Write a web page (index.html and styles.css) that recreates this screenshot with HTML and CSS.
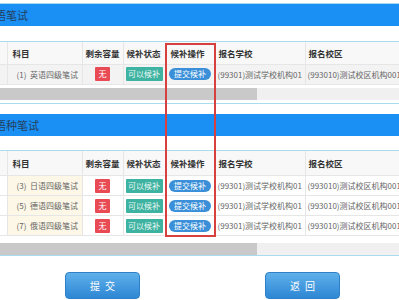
FILE: index.html
```html
<!DOCTYPE html>
<html>
<head>
<meta charset="utf-8">
<link rel="stylesheet" href="styles.css">
</head>
<body>
<div class="page">
  <section class="panel panel-first">
    <div class="panel-title"><span class="title-text">英语笔试</span></div>
    <div class="table-wrap">
      <table class="grid">
        <colgroup>
          <col class="c-idx"><col class="c-subj"><col class="c-left"><col class="c-state"><col class="c-op"><col class="c-school"><col class="c-campus"><col class="c-more">
        </colgroup>
        <thead>
          <tr class="head-row"><th></th><th>科目</th><th>剩余容量</th><th>候补状态</th><th>候补操作</th><th>报名学校</th><th>报名校区</th><th></th></tr>
        </thead>
        <tbody>
          <tr class="row row-hover">
            <td></td>
            <td class="subj">(1)&nbsp;&nbsp;英语四级笔试</td>
            <td class="center"><span class="tag tag-red">无</span></td>
            <td class="center"><span class="tag tag-teal">可以候补</span></td>
            <td class="center"><span class="pill">提交候补</span></td>
            <td class="txt">(99301)测试学校机构01</td>
            <td class="txt">(993010)测试校区机构001</td>
            <td></td>
          </tr>
        </tbody>
      </table>
      <div class="scrollbar scrollbar-first"><div class="thumb"></div></div>
    </div>
  </section>

  <section class="panel panel-second">
    <div class="panel-title"><span class="title-text title-text-2">小语种笔试</span></div>
    <div class="table-wrap table-wrap-2">
      <table class="grid">
        <colgroup>
          <col class="c-idx"><col class="c-subj"><col class="c-left"><col class="c-state"><col class="c-op"><col class="c-school"><col class="c-campus"><col class="c-more">
        </colgroup>
        <thead>
          <tr class="head-row head-row-tall"><th></th><th>科目</th><th>剩余容量</th><th>候补状态</th><th>候补操作</th><th>报名学校</th><th>报名校区</th><th></th></tr>
        </thead>
        <tbody>
          <tr class="row">
            <td></td>
            <td class="subj cream">(3)&nbsp;&nbsp;日语四级笔试</td>
            <td class="center"><span class="tag tag-red">无</span></td>
            <td class="center"><span class="tag tag-teal">可以候补</span></td>
            <td class="center"><span class="pill">提交候补</span></td>
            <td class="txt">(99301)测试学校机构01</td>
            <td class="txt">(993010)测试校区机构001</td>
            <td></td>
          </tr>
          <tr class="row">
            <td></td>
            <td class="subj cream">(5)&nbsp;&nbsp;德语四级笔试</td>
            <td class="center"><span class="tag tag-red">无</span></td>
            <td class="center"><span class="tag tag-teal">可以候补</span></td>
            <td class="center"><span class="pill">提交候补</span></td>
            <td class="txt">(99301)测试学校机构01</td>
            <td class="txt">(993010)测试校区机构001</td>
            <td></td>
          </tr>
          <tr class="row">
            <td></td>
            <td class="subj cream">(7)&nbsp;&nbsp;俄语四级笔试</td>
            <td class="center"><span class="tag tag-red">无</span></td>
            <td class="center"><span class="tag tag-teal">可以候补</span></td>
            <td class="center"><span class="pill">提交候补</span></td>
            <td class="txt">(99301)测试学校机构01</td>
            <td class="txt">(993010)测试校区机构001</td>
            <td></td>
          </tr>
        </tbody>
      </table>
      <div class="scrollbar scrollbar-second"><div class="thumb"></div></div>
    </div>
  </section>

  <div class="actions">
    <button class="btn">提交</button>
    <button class="btn">返回</button>
  </div>

  <div class="highlight-box"></div>
</div>
</body>
</html>
```

FILE: styles.css
```css
* { box-sizing: border-box; }

html, body {
  margin: 0;
  padding: 0;
  background: #ffffff;
}

body {
  width: 399px;
  height: 300px;
  overflow: hidden;
  font-family: "Noto Sans CJK SC", "Noto Sans", sans-serif;
  color: #333;
}

.page {
  position: relative;
  width: 399px;
  height: 300px;
  overflow: hidden;
  padding-top: 3px;
}

.panel {
  border-top: 1px solid #a9dcee;
}

.panel-second {
  margin-top: 3px;
  padding-top: 10px;
}

.panel-title {
  height: 22px;
  background: #1a8ff4;
  overflow: hidden;
  white-space: nowrap;
  font-size: 11px;
  line-height: 22px;
  color: #23415f;
}

.title-text {
  display: inline-block;
  margin-left: -16px;
}

.title-text-2 {
  margin-left: -16px;
}

.table-wrap {
  margin-top: 15px;
  border-top: 1px solid #a9dcee;
  overflow: hidden;
}

.table-wrap-2 {
  margin-top: 14px;
  border-bottom: 1px solid #a9dcee;
}

.grid {
  border-collapse: collapse;
  table-layout: fixed;
  width: 520px;
  font-size: 8px;
}

.c-idx { width: 7px; }
.c-subj { width: 75px; }
.c-left { width: 41px; }
.c-state { width: 42px; }
.c-op { width: 50px; }
.c-school { width: 90px; }
.c-campus { width: 110px; }
.c-more { width: 105px; }

.grid th,
.grid td {
  border: 1px solid #e6e6e6;
  border-top: none;
  padding: 0 3px;
  white-space: nowrap;
  overflow: hidden;
  text-align: left;
}

.grid th:first-child,
.grid td:first-child {
  border-left: none;
}

.head-row {
  height: 22px;
  background: #f8f8f8;
}

.head-row-tall {
  height: 25px;
}

.grid th {
  font-weight: bold;
  color: #333;
  font-size: 8.5px;
}

.grid th:nth-child(2),
.grid th:nth-child(5) {
  padding-left: 5px;
}

.row {
  height: 20px;
}

.row-hover {
  background: #f3f3f3;
}

.subj {
  color: #666;
  padding-left: 9px !important;
}

.cream {
  background: #fcf7e6;
}

.txt {
  color: #666;
  padding-left: 2px !important;
}

.center {
  text-align: center !important;
  padding: 0 !important;
}

.tag {
  display: inline-block;
  height: 14px;
  line-height: 14px;
  color: #fff;
  font-size: 8px;
  vertical-align: middle;
  border-radius: 1px;
}

.tag-red {
  width: 15px;
  background: #e94b55;
}

.tag-teal {
  width: 37px;
  background: #3fb3a1;
  color: #e8f7f4;
}

.pill {
  display: inline-block;
  width: 42px;
  height: 12px;
  line-height: 12px;
  border-radius: 6px;
  background: #3a8fd8;
  color: #fff;
  font-size: 8px;
  vertical-align: middle;
}

.scrollbar {
  height: 12px;
  background: #f0f0f0;
}

.scrollbar-first {
  margin-top: 3px;
}

.scrollbar-second {
  margin-top: 7px;
}

.thumb {
  width: 257px;
  height: 100%;
  background: #c9c9c9;
}

.actions {
  display: flex;
  gap: 125px;
  padding-left: 65px;
  margin-top: 16px;
}

.btn {
  width: 75px;
  height: 27px;
  border: 1px solid #2f80c8;
  border-radius: 4px;
  background: linear-gradient(#5fb0ea, #2e87d4);
  color: #fff;
  font-family: "Noto Sans CJK SC", sans-serif;
  font-size: 10px;
  letter-spacing: 5px;
  text-indent: 5px;
  padding: 0;
}

.highlight-box {
  position: absolute;
  left: 165px;
  top: 43px;
  width: 51px;
  height: 194px;
  border: 2px solid #d6403f;
}
```
